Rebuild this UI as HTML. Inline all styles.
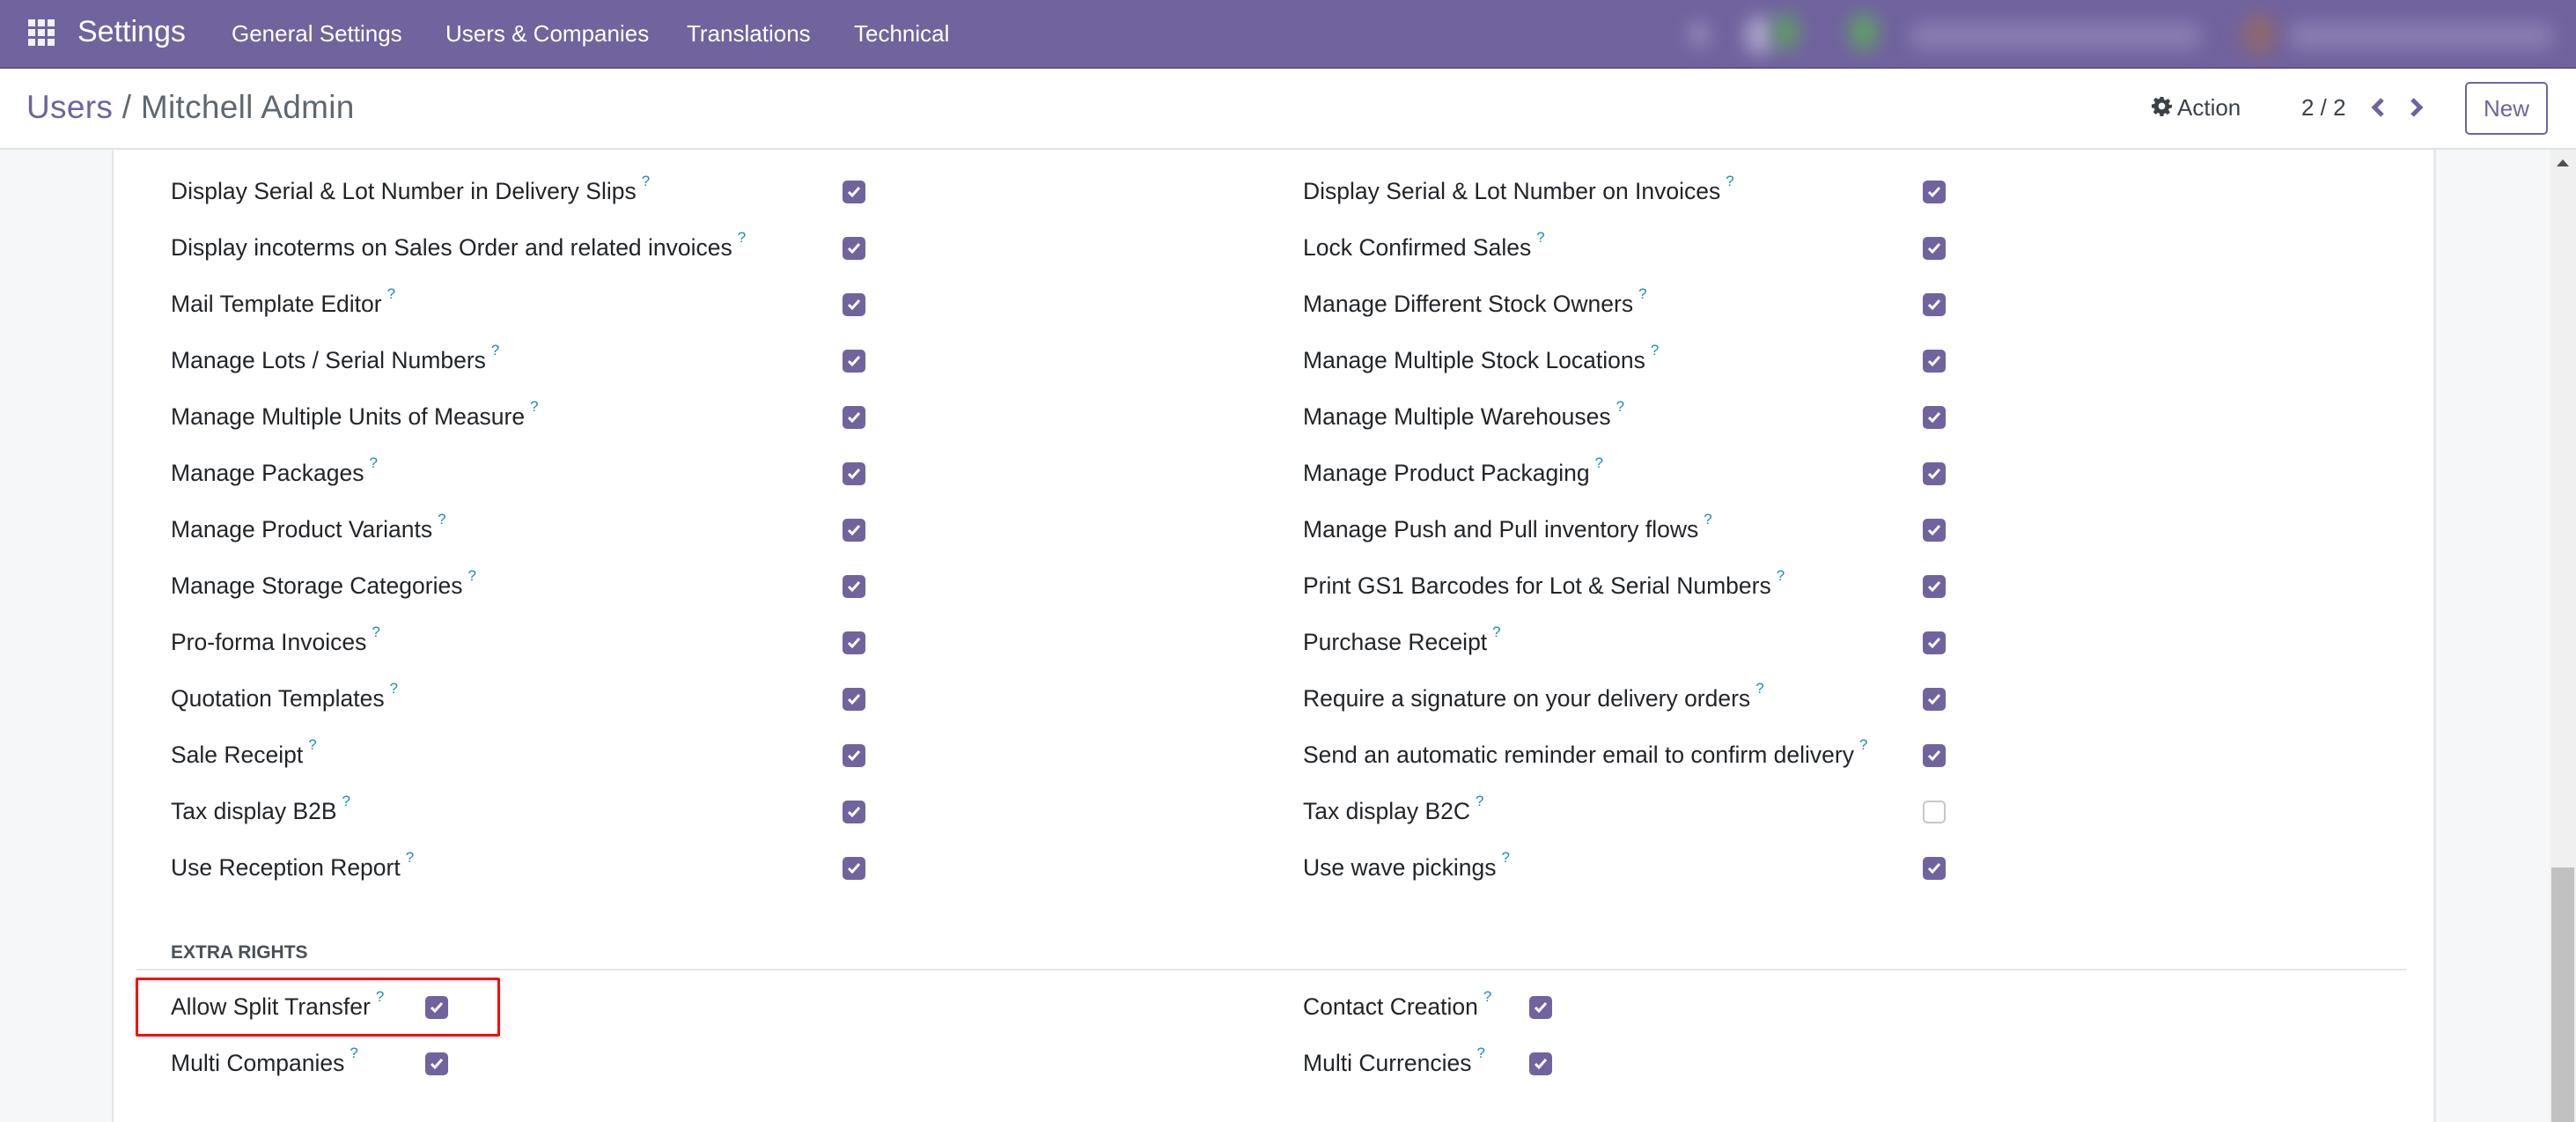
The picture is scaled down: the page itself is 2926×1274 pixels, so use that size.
<!DOCTYPE html>
<html><head><meta charset="utf-8"><style>
*{margin:0;padding:0;box-sizing:border-box}
body{width:2926px;height:1274px;overflow:hidden;background:#f6f7f9;font-family:"Liberation Sans",sans-serif;position:relative}
.nav{position:absolute;left:0;top:0;width:2926px;height:78px;background:#71639e;border-bottom:2px solid #5f5389;overflow:hidden}
.nav .t{position:absolute;color:#fff;white-space:nowrap}
.blob{position:absolute;border-radius:50%;filter:blur(10px)}
.cp{position:absolute;left:0;top:78px;width:2926px;height:92px;background:#fff;border-bottom:2px solid #dee2e6}
.sheet{position:absolute;left:127px;top:170px;width:2640px;height:1104px;background:#fff;border-left:2px solid #e4e6ea;border-right:3px solid #e4e6ea}
.lab{position:absolute;font-size:26.5px;color:#212529;white-space:nowrap;letter-spacing:0px;line-height:30px}
.lab sup{color:#1a8fb5;font-size:17px;position:relative;top:-5px;margin-left:6px}
.cb{position:absolute;width:26px;height:26px;border-radius:5px;background:#71639e}
.cb svg{position:absolute;left:5px;top:6px}
.cb.off{background:#fff;border:2px solid #c8c8c8}
</style></head><body>
<div class="nav">
  <svg style="position:absolute;left:32px;top:22px" width="30" height="30" viewBox="0 0 30 30" fill="#f3f1f8">
    <rect x="0" y="0" width="8" height="8"/><rect x="11" y="0" width="8" height="8"/><rect x="22" y="0" width="8" height="8"/>
    <rect x="0" y="11" width="8" height="8"/><rect x="11" y="11" width="8" height="8"/><rect x="22" y="11" width="8" height="8"/>
    <rect x="0" y="22" width="8" height="8"/><rect x="11" y="22" width="8" height="8"/><rect x="22" y="22" width="8" height="8"/>
  </svg>
  <div class="t" style="left:88px;top:17px;font-size:34px">Settings</div>
  <div class="t" style="left:263px;top:23px;font-size:26px">General Settings</div>
  <div class="t" style="left:506px;top:23px;font-size:26px">Users &amp; Companies</div>
  <div class="t" style="left:780px;top:23px;font-size:26px">Translations</div>
  <div class="t" style="left:970px;top:23px;font-size:26px">Technical</div>
  <div class="blob" style="left:1918px;top:24px;width:24px;height:30px;background:#9388b8"></div>
  <div class="blob" style="left:1982px;top:18px;width:34px;height:44px;background:#aaa3c9"></div>
  <div class="blob" style="left:2014px;top:14px;width:30px;height:44px;background:#5f9a6a"></div>
  <div class="blob" style="left:2100px;top:14px;width:34px;height:44px;background:#5f9e68"></div>
  <div class="blob" style="left:2170px;top:26px;width:330px;height:30px;background:#8a7db1;border-radius:14px"></div>
  <div class="blob" style="left:2546px;top:14px;width:40px;height:50px;background:#8d6870"></div>
  <div class="blob" style="left:2600px;top:26px;width:300px;height:30px;background:#8a7db1;border-radius:14px"></div>
</div>
<div class="cp">
  <div style="position:absolute;left:30px;top:23px;font-size:37px;letter-spacing:0.3px;white-space:nowrap;color:#5f6770"><span style="color:#71639e">Users</span> / Mitchell Admin</div>
  <svg style="position:absolute;left:2444px;top:31px" width="23" height="23" viewBox="0 0 24 24"><path fill="#3b4147" d="M10 1h4l.6 3.2 2 .9 2.7-1.9 2.8 2.8-1.9 2.7.9 2L24 10v4l-3.2.6-.9 2 1.9 2.7-2.8 2.8-2.7-1.9-2 .9L14 24h-4l-.6-3.2-2-.9-2.7 1.9-2.8-2.8 1.9-2.7-.9-2L0 14v-4l3.2-.6.9-2L2.2 4.7 5 1.9l2.7 1.9 2-.9zM12 8a4 4 0 100 8 4 4 0 000-8z"/></svg>
  <div style="position:absolute;left:2473px;top:29px;font-size:26px;color:#3b4147">Action</div>
  <div style="position:absolute;left:2614px;top:29px;font-size:26px;color:#3b4147">2 / 2</div>
  <svg style="position:absolute;left:2692px;top:33px" width="18" height="22" viewBox="0 0 18 22"><path d="M14 2 5 11l9 9" stroke="#71639e" stroke-width="5" fill="none"/></svg>
  <svg style="position:absolute;left:2736px;top:33px" width="18" height="22" viewBox="0 0 18 22"><path d="M4 2l9 9-9 9" stroke="#71639e" stroke-width="5" fill="none"/></svg>
  <div style="position:absolute;left:2800px;top:15px;width:94px;height:60px;border:2px solid #71639e;border-radius:5px;color:#71639e;font-size:26px;text-align:center;line-height:56px">New</div>
</div>
<div class="sheet"></div>
<div style="position:absolute;left:2896px;top:170px;width:30px;height:1104px;background:#f0f0f0"></div>
<svg style="position:absolute;left:2903px;top:180px" width="16" height="10"><path d="M8 1 15 9H1z" fill="#505050"/></svg>
<div style="position:absolute;left:2898px;top:985px;width:26px;height:289px;background:#c1c1c1"></div>

<div style="position:absolute;left:194px;top:1070px;font-size:21px;font-weight:bold;color:#495057">EXTRA RIGHTS</div>
<div style="position:absolute;left:155px;top:1100px;width:2578px;height:2px;background:#e4e6ea"></div>
<div style="position:absolute;left:154px;top:1110px;width:414px;height:67px;border:3px solid #f00;border-radius:2px"></div>
<div id="rows"></div>

<script>
var L=["Display Serial &amp; Lot Number in Delivery Slips","Display incoterms on Sales Order and related invoices","Mail Template Editor","Manage Lots / Serial Numbers","Manage Multiple Units of Measure","Manage Packages","Manage Product Variants","Manage Storage Categories","Pro-forma Invoices","Quotation Templates","Sale Receipt","Tax display B2B","Use Reception Report"];
var R=["Display Serial &amp; Lot Number on Invoices","Lock Confirmed Sales","Manage Different Stock Owners","Manage Multiple Stock Locations","Manage Multiple Warehouses","Manage Product Packaging","Manage Push and Pull inventory flows","Print GS1 Barcodes for Lot &amp; Serial Numbers","Purchase Receipt","Require a signature on your delivery orders","Send an automatic reminder email to confirm delivery","Tax display B2C","Use wave pickings"];
var ck='<svg width="16" height="14" viewBox="0 0 16 14"><path d="M2 7l4 4 8-9" stroke="#fff" stroke-width="3" fill="none"/></svg>';
var h='';
function cb(x,y,off){h+='<div class="cb'+(off?' off':'')+'" style="left:'+x+'px;top:'+y+'px">'+(off?'':ck)+'</div>';}
function lab(x,y,t){h+='<div class="lab" style="left:'+x+'px;top:'+y+'px">'+t+'<sup>?</sup></div>';}
for(var i=0;i<13;i++){var y=205+i*64;cb(957,y);cb(2184,y,i==11);lab(194,y-9,L[i]);lab(1480,y-9,R[i]);}
cb(483,1131);cb(483,1195);cb(1737,1131);cb(1737,1195);
lab(194,1122,"Allow Split Transfer");lab(194,1186,"Multi Companies");
lab(1480,1122,"Contact Creation");lab(1480,1186,"Multi Currencies");
document.getElementById('rows').innerHTML=h;
</script>
</body></html>
